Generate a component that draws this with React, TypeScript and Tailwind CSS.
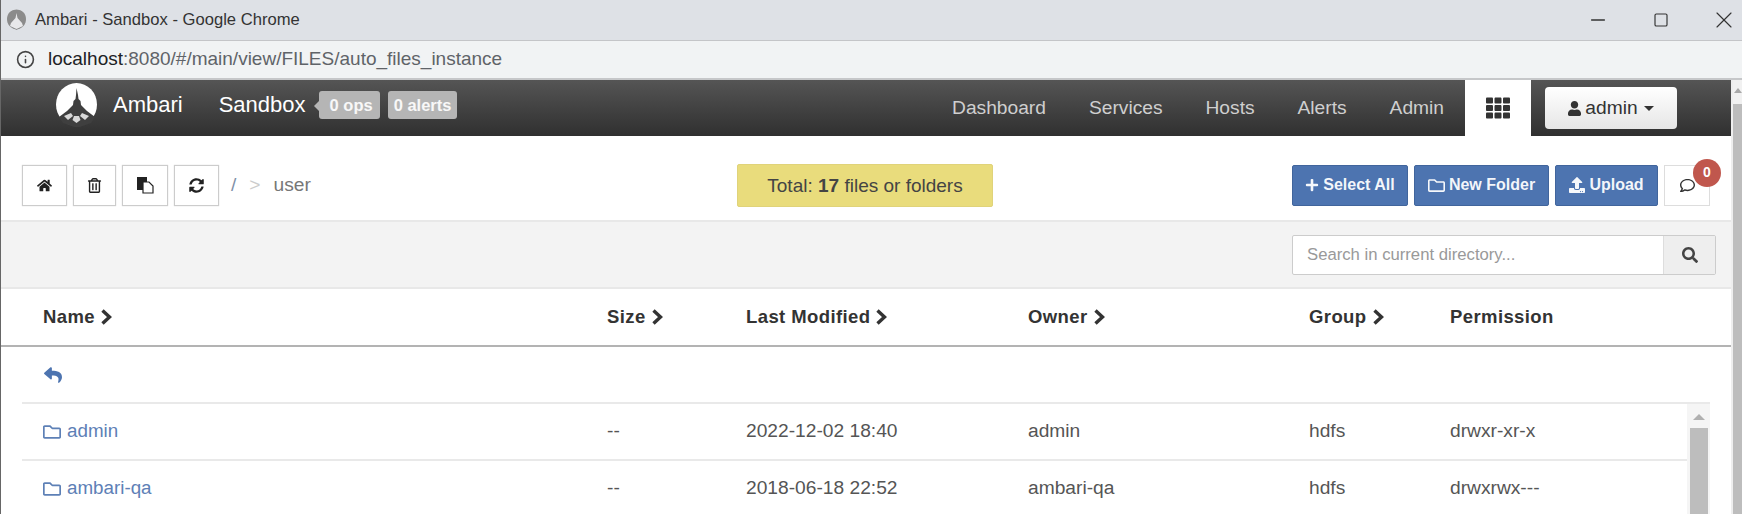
import { Info, Minus, Square, X } from "lucide-react";
import {
  FaHome,
  FaPlus,
  FaRegComment,
  FaRegFolder,
  FaRegTrashAlt,
  FaReply,
  FaSearch,
  FaSyncAlt,
  FaTh,
  FaUpload,
  FaUser,
} from "react-icons/fa";

const sans = "font-['Liberation_Sans',Arial,sans-serif]";
const grid = "grid grid-cols-[564px_139px_282px_281px_141px_1fr]";

const navLinks = ["Dashboard", "Services", "Hosts", "Alerts", "Admin"];

const columns = [
  { label: "Name", sort: true },
  { label: "Size", sort: true },
  { label: "Last Modified", sort: true },
  { label: "Owner", sort: true },
  { label: "Group", sort: true },
  { label: "Permission", sort: false },
];

const rows = [
  { name: "admin", size: "--", modified: "2022-12-02 18:40", owner: "admin", group: "hdfs", perm: "drwxr-xr-x" },
  { name: "ambari-qa", size: "--", modified: "2018-06-18 22:52", owner: "ambari-qa", group: "hdfs", perm: "drwxrwx---" },
];

function Logo({ className }: { className: string }) {
  return (
    <svg viewBox="0 0 41 44" className={className}>
      <ellipse cx="20.5" cy="21.5" rx="20.5" ry="21.5" fill="#fff" />
      <path
        d="M20.5 5l1.5 7 .5 4 2 2 .5 4 6 6 8 6-4 6-14 5-14-5-4-6 8-6 6-6 .5-4 2-2 .5-4z"
        fill="#3f3f3f"
      />
      <path d="M8 33l7-3 2 3-5 4zM33 33l-7-3-2 3 5 4zM18 33h5l1.5 4-4 3-4-3z" fill="#d8d8d8" />
    </svg>
  );
}

function SortChevron() {
  return (
    <svg viewBox="0 0 13 16" className="h-[16px] w-[13px]">
      <path d="M2.5 1.5L9.5 8l-7 6.5" fill="none" stroke="#333" strokeWidth="3.4" />
    </svg>
  );
}

function ToolButton({ width, children }: { width: string; children: React.ReactNode }) {
  return (
    <button className={`flex h-[41px] items-center justify-center border border-[#ccc] bg-white text-[#222] shadow-[0_0_1px_#ccc] ${width}`}>
      {children}
    </button>
  );
}

function ActionButton({ width, icon, label }: { width: string; icon: React.ReactNode; label: string }) {
  return (
    <button className={`flex h-[41px] items-center justify-center gap-[4px] rounded-[2px] border border-[#41659c] bg-[#4d74b0] text-[16px] font-bold text-white/95 ${width}`}>
      {icon}
      <span>{label}</span>
    </button>
  );
}

export default function App() {
  return (
    <div className={`flex h-[514px] w-[1742px] flex-col overflow-hidden border-l border-[#666] bg-white ${sans}`}>
      <div className="flex h-[41px] shrink-0 items-center justify-between border-b border-[#c4c5c8] bg-[#dee1e6] pr-[6px] pl-[5px]">
        <div className="flex items-center gap-[8px] text-[16.6px] text-[#333]">
          <div className="flex h-[21px] w-[21px] items-center justify-center overflow-hidden rounded-full">
            <svg viewBox="0 0 40 44" className="h-[22px] w-[21px]">
              <path d="M20 1C9 1 1 9 1 20c0 9 5 16 12 19l7 3 7-3c7-3 12-10 12-19C39 9 31 1 20 1z" fill="#8b8b8b" />
              <path d="M20 8l2 10 9 10 2 6-13 6-13-6 2-6 9-10z" fill="#e8e8ea" />
            </svg>
          </div>
          <span>Ambari - Sandbox - Google Chrome</span>
        </div>
        <div className="flex items-center gap-[39px] text-[#333]">
          <span className="flex w-[24px] justify-center">
            <Minus className="h-[22px] w-[22px]" strokeWidth={1.4} />
          </span>
          <span className="flex w-[24px] justify-center">
            <Square className="h-[16px] w-[16px]" strokeWidth={1.75} />
          </span>
          <span className="flex w-[24px] justify-center">
            <X className="h-[28px] w-[28px] shrink-0" strokeWidth={1} />
          </span>
        </div>
      </div>

      <div className="flex h-[39px] shrink-0 items-center gap-[13px] border-b-2 border-[#c6c7c9] bg-[#f1f3f4] pl-[15px] text-[19px] text-[#5f6368]">
        <Info className="h-[19px] w-[19px] text-[#444]" strokeWidth={2} />
        <span>
          <span className="text-[#202124]">localhost</span>:8080/#/main/view/FILES/auto_files_instance
        </span>
      </div>

      <div className="flex min-h-0 flex-1">
        <div className="min-w-0 flex-1">
          <div className="flex h-[56px] items-center bg-gradient-to-b from-[#555555] to-[#303030] pr-[54px] pl-[55px]">
            <Logo className="mb-[6px] h-[44px] w-[41px]" />
            <span className="mb-[7px] ml-[16px] text-[22px] text-white">Ambari</span>
            <span className="mb-[7px] ml-[36px] text-[22px] text-white">Sandbox</span>
            <span className="relative mb-[6px] ml-[13px] rounded-[3px] bg-[#b5b5b5] pt-[4px] pr-[7px] pb-[4px] pl-[11px] text-[16.5px] leading-[20px] font-bold text-white/90">
              <span className="absolute top-[10px] -left-[5px] h-0 w-0 border-y-[5px] border-r-[5px] border-y-transparent border-r-[#b5b5b5]" />
              0 ops
            </span>
            <span className="mb-[6px] ml-[8px] rounded-[3px] bg-[#b5b5b5] px-[6px] py-[4px] text-[16.5px] leading-[20px] font-bold text-white/90">
              0 alerts
            </span>
            <div className="ml-auto flex items-center gap-[43px] text-[19.2px] text-[#cfcfcf]">
              {navLinks.map((link) => (
                <span key={link}>{link}</span>
              ))}
            </div>
            <div className="ml-[21px] flex h-[56px] w-[66px] items-center justify-center bg-white">
              <FaTh className="h-[24px] w-[24px] text-[#333]" />
            </div>
            <button className="ml-[14px] flex h-[42px] w-[132px] items-center justify-center gap-[4px] rounded-[4px] bg-gradient-to-b from-white to-[#e6e6e6] text-[19.2px] text-[#333]">
              <FaUser className="h-[15px] w-[13px]" />
              <span>admin</span>
              <span className="ml-[2px] h-0 w-0 border-x-[5px] border-t-[5px] border-x-transparent border-t-[#333]" />
            </button>
          </div>

          <div className="flex h-[84px] items-center pt-[14px] pr-[21px] pl-[21px]">
            <div className="flex items-center gap-[6px]">
              <ToolButton width="w-[45px]">
                <FaHome className="h-[15px] w-[15px]" />
              </ToolButton>
              <ToolButton width="w-[43px]">
                <FaRegTrashAlt className="h-[15px] w-[15px]" />
              </ToolButton>
              <ToolButton width="w-[46px]">
                <svg viewBox="0 0 18 18" className="h-[18px] w-[18px]">
                  <path d="M1 1h10v13H1z" fill="#222" />
                  <path d="M7 6h6l4 4v7H7z" fill="#fff" stroke="#222" strokeWidth="1.2" />
                </svg>
              </ToolButton>
              <ToolButton width="w-[45px]">
                <FaSyncAlt className="h-[15px] w-[15px]" />
              </ToolButton>
            </div>
            <div className="ml-[12px] flex w-[506px] items-center text-[19.2px] text-[#777]">
              <span className="text-[#7f8fa8]">/</span>
              <span className="ml-[13px] text-[#ccc]">&gt;</span>
              <span className="ml-[13px]">user</span>
            </div>
            <div className="flex h-[43px] w-[256px] items-center justify-center rounded-[2px] border border-[#e0d37a] bg-[#e9dc7c] pt-[2px] text-[19px] text-[#444]">
              Total:&nbsp;<b>17</b>&nbsp;files or folders
            </div>
            <div className="ml-auto flex items-center gap-[6px]">
              <ActionButton width="w-[116px]" icon={<FaPlus className="h-[14px] w-[14px]" />} label="Select All" />
              <ActionButton width="w-[135px]" icon={<FaRegFolder className="h-[17px] w-[17px]" />} label="New Folder" />
              <ActionButton width="w-[103px]" icon={<FaUpload className="h-[16px] w-[16px]" />} label="Upload" />
              <button className="relative flex h-[41px] w-[46px] items-center justify-center border border-[#ddd] bg-white text-[#333]">
                <FaRegComment className="h-[15px] w-[17px]" />
                <span className="absolute -top-[7px] -right-[12px] flex h-[28px] w-[28px] items-center justify-center rounded-full bg-[#c0574d] text-[14px] font-bold text-white">
                  0
                </span>
              </button>
            </div>
          </div>

          <div className="flex h-[69px] items-center justify-end border-y-2 border-[#e8e8e8] bg-[#f3f3f3] pr-[15px]">
            <div className="flex h-[40px] w-[424px] rounded-[2px] border border-[#ccc] bg-white">
              <span className="flex flex-1 items-center pl-[14px] text-[16.7px] text-[#999]">Search in current directory...</span>
              <span className="flex w-[52px] items-center justify-center border-l border-[#ddd] bg-[#eee] text-[#444]">
                <FaSearch className="h-[16px] w-[16px]" />
              </span>
            </div>
          </div>

          <div className={`${grid} h-[58px] items-center border-b-2 border-[#b3b3b3] pl-[42px] text-[18.5px] font-bold tracking-[0.4px] text-[#333]`}>
            {columns.map((col) => (
              <div key={col.label} className="flex items-center gap-[5px]">
                {col.label}
                {col.sort && <SortChevron />}
              </div>
            ))}
          </div>

          <div className="mr-[21px] ml-[21px] flex h-[57px] items-center border-b-2 border-[#e9e9e9] pl-[21px] text-[#4d74b0]">
            <FaReply className="h-[18px] w-[20px]" />
          </div>

          <div className="flex pr-[21px]">
            <div className="min-w-0 flex-1">
              {rows.map((row) => (
                <div key={row.name} className={`${grid} ml-[21px] h-[57px] items-center border-b-2 border-[#e9e9e9] pl-[21px] text-[19.2px] text-[#555]`}>
                  <div className="flex items-center gap-[6px] text-[18.8px] text-[#5d80b6]">
                    <FaRegFolder className="h-[18px] w-[18px]" />
                    {row.name}
                  </div>
                  <div>{row.size}</div>
                  <div>{row.modified}</div>
                  <div>{row.owner}</div>
                  <div>{row.group}</div>
                  <div>{row.perm}</div>
                </div>
              ))}
            </div>
            <div className="flex h-[120px] w-[23px] shrink-0 flex-col items-center bg-[#f5f5f5]">
              <span className="mt-[10px] h-0 w-0 border-x-[6px] border-b-[6px] border-x-transparent border-b-[#b0b0b0]" />
              <span className="mt-[8px] w-[18px] flex-1 bg-[#bdbdbd]" />
            </div>
          </div>
        </div>
        <div className="flex w-[11px] shrink-0 flex-col items-center border-l-2 border-[#eee] bg-[#f1f1f1]">
          <span className="mt-[8px] h-0 w-0 border-x-[4px] border-b-[5px] border-x-transparent border-b-[#a8a8a8]" />
          <span className="mt-[11px] w-full flex-1 bg-[#bdbdbd]" />
        </div>
      </div>
    </div>
  );
}
